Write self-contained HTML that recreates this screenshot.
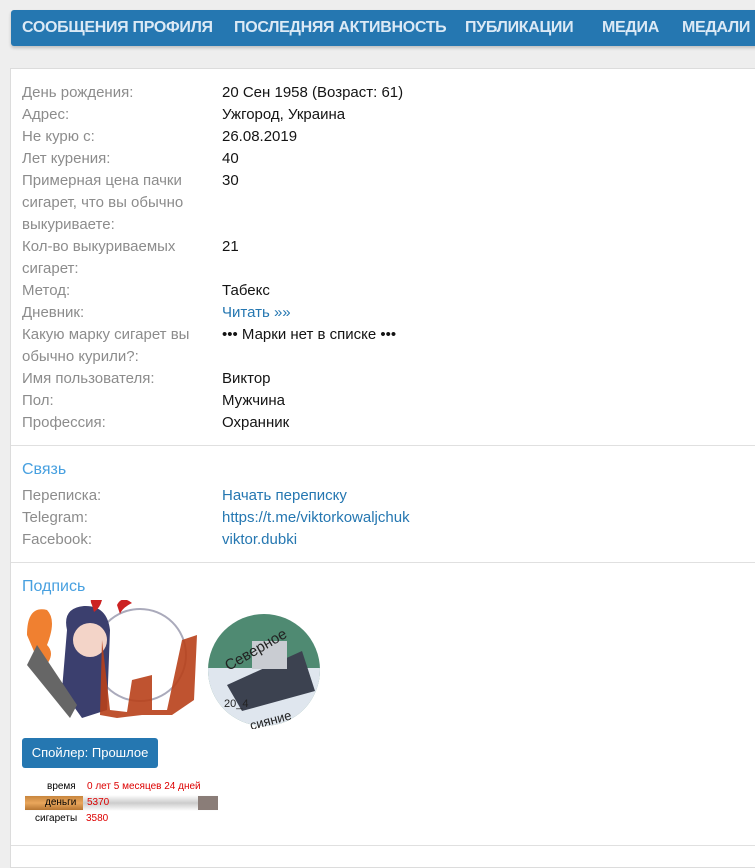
<!DOCTYPE html>
<html><head><meta charset="utf-8"><style>
*{margin:0;padding:0;box-sizing:border-box}
body{width:755px;height:849px;background:#eee;font-family:"Liberation Sans","Noto Sans CJK SC",sans-serif;overflow:hidden;position:relative}
.nav{position:absolute;left:11px;top:10px;width:760px;height:36px;background:#2577b1;border-radius:3px;box-shadow:0 2px 3px rgba(0,0,0,.2);color:#dbe9f5;font-weight:bold;font-size:16px;letter-spacing:-0.3px;white-space:nowrap;line-height:36px;padding-left:11px}
.nav span{position:absolute;top:0}
.card{position:absolute;left:10px;top:68px;width:760px;height:800px;background:#fff;border:1px solid #dcdcdc}
.row{position:absolute;left:22px;font-size:15px;line-height:22px;color:#8c8c8c}
.v{position:absolute;left:222px;font-size:15px;line-height:22px;color:#141414}
a{color:#2577b1;text-decoration:none}
.h{position:absolute;left:22px;font-size:16px;color:#47a0e0}
.sep{position:absolute;left:11px;width:760px;height:1px;background:#e0e0e0}
</style></head><body>
<div class="nav"><span style="left:11px">СООБЩЕНИЯ ПРОФИЛЯ</span><span style="left:223px">ПОСЛЕДНЯЯ АКТИВНОСТЬ</span><span style="left:454px">ПУБЛИКАЦИИ</span><span style="left:591px">МЕДИА</span><span style="left:671px">МЕДАЛИ</span></div>
<div class="card"></div>
<div class="row" style="top:82px">День рождения:</div><div class="v" style="top:82px">20 Сен 1958 (Возраст: 61)</div>
<div class="row" style="top:104px">Адрес:</div><div class="v" style="top:104px">Ужгород, Украина</div>
<div class="row" style="top:126px">Не курю с:</div><div class="v" style="top:126px">26.08.2019</div>
<div class="row" style="top:148px">Лет курения:</div><div class="v" style="top:148px">40</div>
<div class="row" style="top:170px">Примерная цена пачки<br>сигарет, что вы обычно<br>выкуриваете:</div><div class="v" style="top:170px">30</div>
<div class="row" style="top:236px">Кол-во выкуриваемых<br>сигарет:</div><div class="v" style="top:236px">21</div>
<div class="row" style="top:280px">Метод:</div><div class="v" style="top:280px">Табекс</div>
<div class="row" style="top:302px">Дневник:</div><div class="v" style="top:302px"><a>Читать »»</a></div>
<div class="row" style="top:324px">Какую марку сигарет вы<br>обычно курили?:</div><div class="v" style="top:324px">••• Марки нет в списке •••</div>
<div class="row" style="top:368px">Имя пользователя:</div><div class="v" style="top:368px">Виктор</div>
<div class="row" style="top:390px">Пол:</div><div class="v" style="top:390px">Мужчина</div>
<div class="row" style="top:412px">Профессия:</div><div class="v" style="top:412px">Охранник</div>
<div class="sep" style="top:445px"></div>
<div class="h" style="top:461px">Связь</div>
<div class="row" style="top:485px">Переписка:</div><div class="v" style="top:485px"><a>Начать переписку</a></div>
<div class="row" style="top:507px">Telegram:</div><div class="v" style="top:507px"><a>https://t.me/viktorkowaljchuk</a></div>
<div class="row" style="top:529px">Facebook:</div><div class="v" style="top:529px"><a>viktor.dubki</a></div>
<div class="sep" style="top:562px"></div>
<div class="h" style="top:578px">Подпись</div>
<div class="sep" style="top:845px"></div>
<svg style="position:absolute;left:22px;top:600px" width="180" height="122">
<circle cx="118" cy="55" r="46" fill="none" stroke="#aab" stroke-width="2"/>
<path d="M45 30 Q40 8 62 6 Q85 5 88 30 L85 110 L60 118 L40 90Z" fill="#3b3f6e"/>
<circle cx="68" cy="40" r="17" fill="#f3d4c8"/>
<path d="M5 35 Q5 5 25 10 Q35 20 25 45 Q35 55 20 70Z" fill="#f08030"/>
<path d="M70 5 Q65 -5 80 0 Q78 8 72 12Z M95 5 Q100 -5 110 3 Q100 8 98 14Z" fill="#c22"/>
<path d="M80 40 L88 110 L105 112 L110 80 L130 75 L130 110 L145 110 L160 40 L175 35 L172 100 L150 115 L120 115 L95 118 L78 115 Z" fill="#b8401a" opacity=".9"/>
<path d="M15 45 L55 105 L48 118 L5 65Z" fill="#666"/>
</svg>
<svg style="position:absolute;left:207px;top:613px" width="116" height="116">
<defs><clipPath id="c"><circle cx="57" cy="57" r="56"/></clipPath></defs>
<g clip-path="url(#c)"><rect width="116" height="116" fill="#4f8a72"/><rect y="55" width="116" height="61" fill="#dfe6ee"/><path d="M20 72 L95 38 L108 78 L35 98Z" fill="#3c4250"/><rect x="45" y="28" width="35" height="28" fill="#c9ccd2"/></g>
<text x="10" y="45" font-size="15" fill="#222" transform="rotate(-30 40 30)" font-family="Liberation Sans">Северное</text>
<text x="17" y="94" font-size="11" fill="#222" font-family="Liberation Sans">20_4</text>
<text x="42" y="110" font-size="13" fill="#222" transform="rotate(-15 70 105)" font-family="Liberation Sans">сияние</text>
</svg>
<div style="position:absolute;left:22px;top:738px;width:136px;height:30px;background:#2577b1;border-radius:3px;color:#fff;font-size:13px;line-height:30px;text-align:center">Спойлер: Прошлое</div>
<div style="position:absolute;left:25px;top:779px;font-size:10px;line-height:16px">
<div style="position:relative;height:16px"><span style="position:absolute;left:22px">время</span><span style="position:absolute;left:62px;color:#d00;white-space:nowrap">0 лет 5 месяцев 24 дней</span></div>
<div style="position:relative;height:16px;width:193px;background:linear-gradient(#fff,#ccc,#fff)"><div style="position:absolute;left:0;top:1px;width:58px;height:14px;background:linear-gradient(#c8863e,#e9a65c,#b77632)"></div><div style="position:absolute;right:0;top:1px;width:20px;height:14px;background:#8a7d78"></div><span style="position:absolute;left:20px">деньги</span><span style="position:absolute;left:62px;color:#d00">5370</span></div>
<div style="position:relative;height:16px"><span style="position:absolute;left:10px">сигареты</span><span style="position:absolute;left:61px;color:#d00">3580</span></div>
</div>
</body></html>
